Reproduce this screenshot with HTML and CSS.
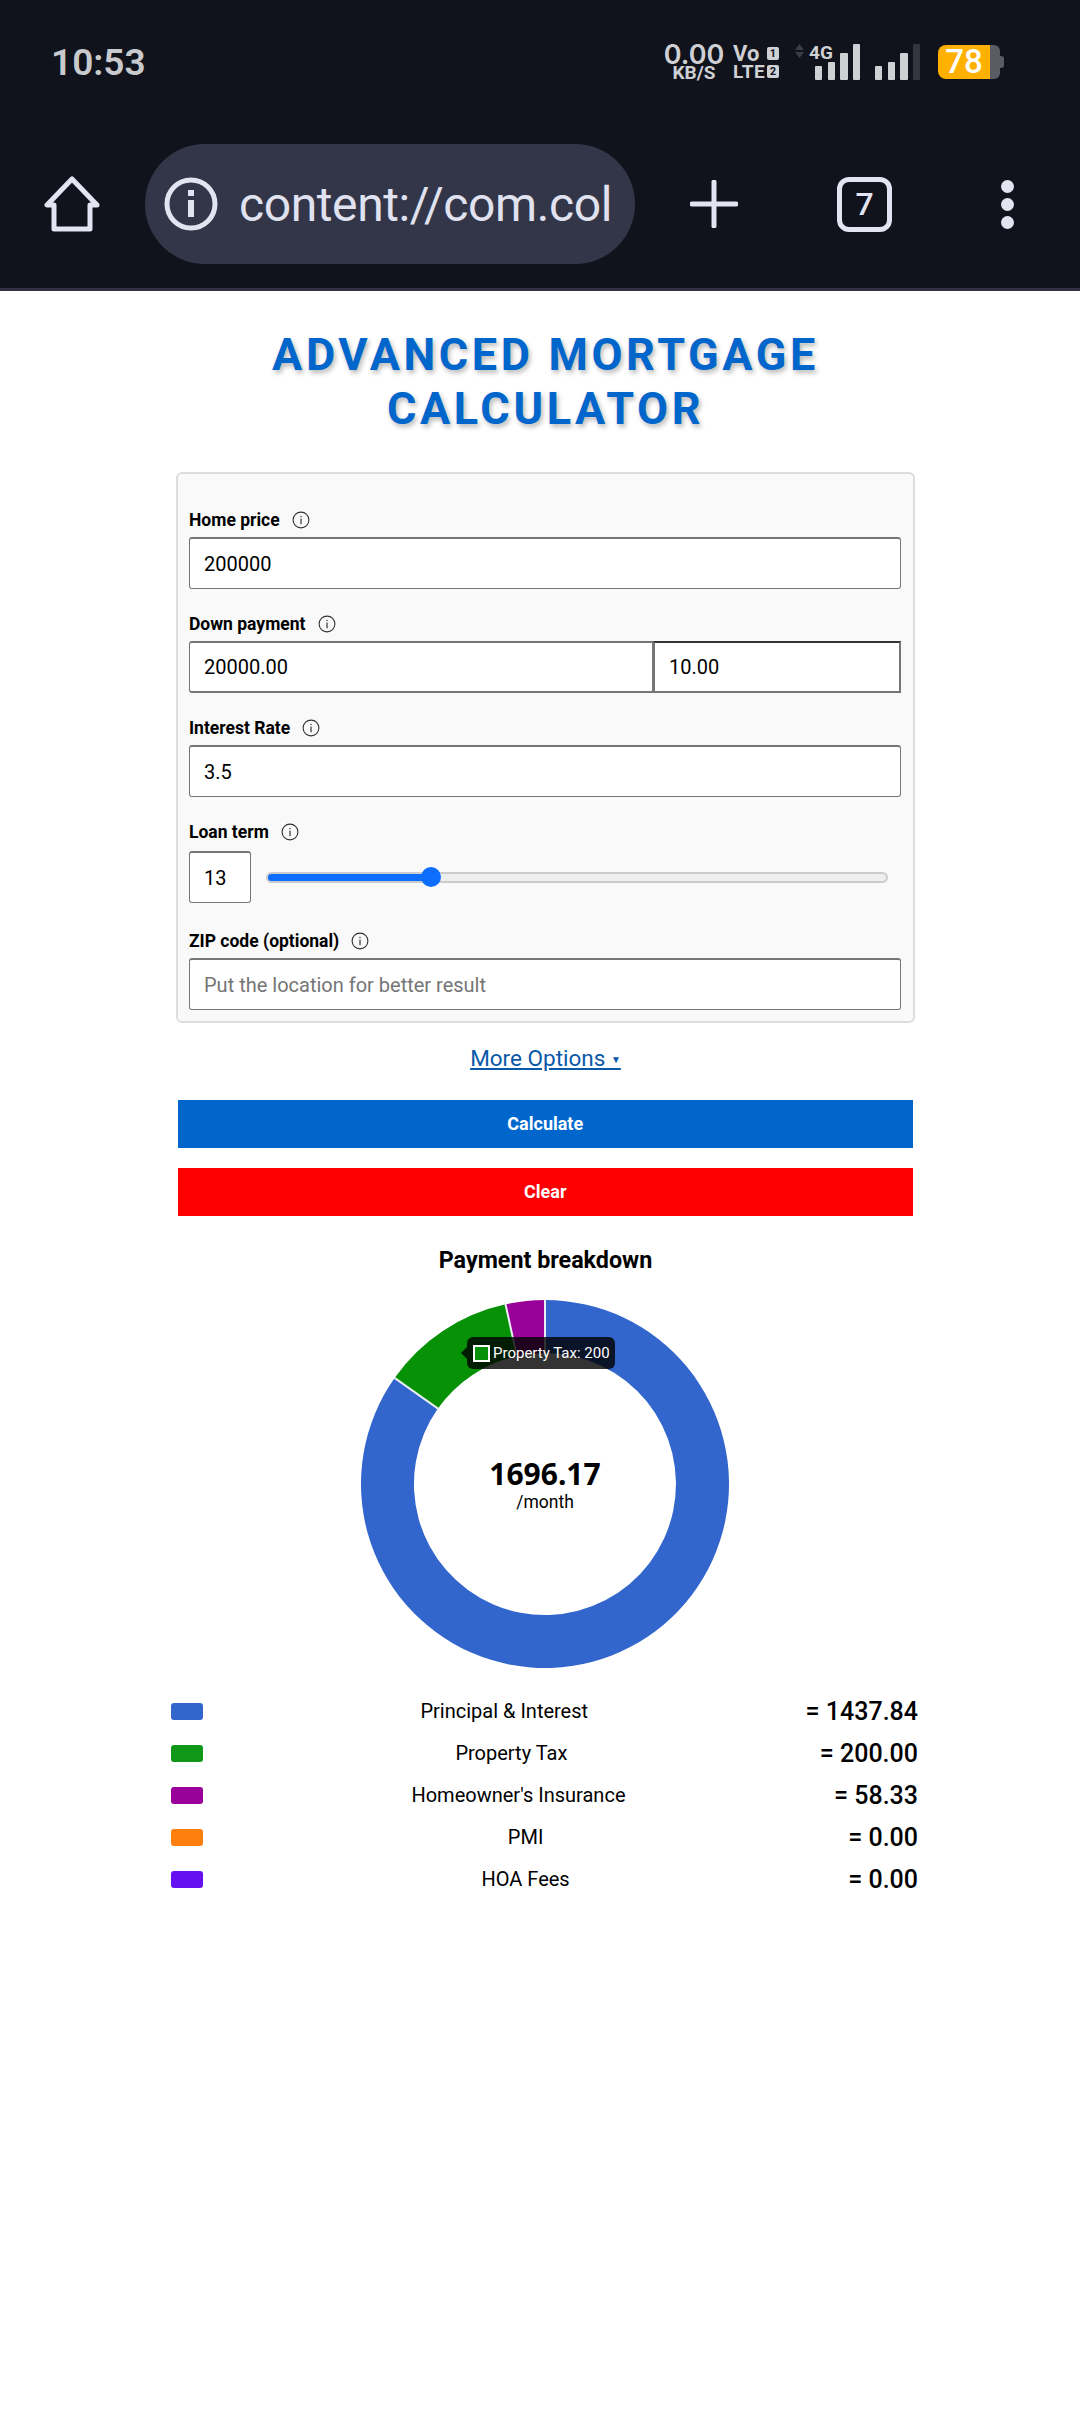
FILE: index.html
```html
<!DOCTYPE html>
<html lang="en">
<head>
    <meta charset="UTF-8">
    <meta name="viewport" content="width=device-width, initial-scale=1.0">
    <title>Advanced Mortgage Calculator</title>
    <link rel="stylesheet" href="styles.css">
</head>
<body>
    <svg class="defs" width="0" height="0">
        <symbol id="info" viewBox="0 0 18 18">
            <circle cx="9" cy="9" r="7.9" fill="none" stroke="#333" stroke-width="1.1"/>
            <rect x="8.4" y="7.6" width="1.2" height="5.6" fill="#333"/>
            <rect x="8.4" y="4.9" width="1.2" height="1.3" fill="#333"/>
        </symbol>
    </svg>

    <!-- Phone status bar + browser toolbar -->
    <header class="browser-bar">
        <div class="status-bar">
            <span class="clock">10:53</span>
            <div class="status-icons">
                <div class="net-speed">
                    <span class="speed-value">0.00</span>
                    <span class="speed-unit">KB/S</span>
                </div>
                <div class="volte">
                    <div class="volte-row"><span class="vo">Vo</span><span class="sim">1</span></div>
                    <div class="volte-row"><span class="lte">LTE</span><span class="sim">2</span></div>
                </div>
                <svg class="signal" width="126" height="36" viewBox="0 0 126 36">
                    <path d="M4.500 0 L9 6 H0 Z M0 8 H9 L4.500 14 Z" fill="#3a3d47"/>
                    <text x="14" y="15" class="signal-text">4G</text>
                    <rect x="20" y="22" width="7" height="14" rx="1" fill="#cfd0d3"/>
                    <rect x="33" y="18" width="7" height="18" rx="1" fill="#cfd0d3"/>
                    <rect x="45" y="9" width="8" height="27" rx="1" fill="#cfd0d3"/>
                    <rect x="58" y="0" width="7" height="36" rx="1" fill="#cfd0d3"/>
                    <rect x="80" y="22" width="7" height="14" rx="1" fill="#cfd0d3"/>
                    <rect x="93" y="18" width="7" height="18" rx="1" fill="#cfd0d3"/>
                    <rect x="105" y="9" width="8" height="27" rx="1" fill="#cfd0d3"/>
                    <rect x="118" y="0" width="7" height="36" rx="1" fill="#33363f"/>
                </svg>
                <div class="battery">
                    <span class="battery-level">78</span>
                    <span class="battery-rest"></span>
                </div>
            </div>
        </div>
        <div class="toolbar">
            <svg class="home-icon" width="56" height="56" viewBox="0 0 56 56">
                <path d="M28 3 L3 29 H10 V53 H46 V29 H53 Z" fill="none" stroke="#e2e4f2" stroke-width="5" stroke-linejoin="round"/>
            </svg>
            <div class="url-pill">
                <svg width="54" height="54" viewBox="0 0 54 54">
                    <circle cx="27" cy="27" r="24" fill="none" stroke="#e2e4f2" stroke-width="5"/>
                    <rect x="24" y="23" width="6" height="17" fill="#e2e4f2"/>
                    <rect x="24" y="13" width="6" height="6" fill="#e2e4f2"/>
                </svg>
                <span class="url-text">content://com.col</span>
            </div>
            <svg class="plus-icon" width="48" height="48" viewBox="0 0 48 48">
                <path d="M24 2 V46 M2 24 H46" stroke="#e2e4f2" stroke-width="5" stroke-linecap="round"/>
            </svg>
            <div class="tab-count">7</div>
            <div class="menu-dots"><span></span><span></span><span></span></div>
        </div>
    </header>

    <main class="calculator">
        <h1>ADVANCED MORTGAGE<br>CALCULATOR</h1>

        <form class="loan-form">
            <div class="form-group">
                <label>Home price <svg class="info"><use href="#info"/></svg></label>
                <input type="text" value="200000">
            </div>
            <div class="form-group">
                <label>Down payment <svg class="info"><use href="#info"/></svg></label>
                <div class="down-payment">
                    <input type="text" class="down-amount" value="20000.00">
                    <input type="text" class="down-percent" value="10.00">
                </div>
            </div>
            <div class="form-group">
                <label>Interest Rate <svg class="info"><use href="#info"/></svg></label>
                <input type="text" value="3.5">
            </div>
            <div class="form-group term-group">
                <label>Loan term <svg class="info"><use href="#info"/></svg></label>
                <div class="term-row">
                    <input type="text" class="term-value" value="13">
                    <input type="range" class="term-slider" min="1" max="48" value="13">
                </div>
            </div>
            <div class="form-group">
                <label>ZIP code (optional) <svg class="info"><use href="#info"/></svg></label>
                <input type="text" placeholder="Put the location for better result">
            </div>
        </form>

        <a href="#" class="more-options">More Options <small>▼</small></a>

        <button type="button" class="btn btn-calculate">Calculate</button>
        <button type="button" class="btn btn-clear">Clear</button>

        <h2>Payment breakdown</h2>

        <div class="chart">
            <svg width="380" height="380" viewBox="0 0 380 380">
                <path d="M190 6 A184 184 0 1 1 39.600 84 L82.900 114.500 A131 131 0 1 0 190 59 Z" fill="#3366cc"/>
                <path d="M39.600 84 A184 184 0 0 1 150.550 10.300 L161.900 62.100 A131 131 0 0 0 82.900 114.500 Z" fill="#069106"/>
                <path d="M150.550 10.300 A184 184 0 0 1 190 6 L190 59 A131 131 0 0 0 161.900 62.100 Z" fill="#990099"/>
                <!-- slice separators -->
                <path d="M190 5 V60 M38.800 83.400 L83.700 115.100 M150.300 9.300 L162.100 63.100" stroke="#e8eef2" stroke-width="2"/>
            </svg>
            <div class="chart-center">
                <strong>1696.17</strong>
                <span>/month</span>
            </div>
            <div class="chart-tooltip">
                <span class="tooltip-box"></span>
                <span>Property Tax: 200</span>
            </div>
        </div>

        <ul class="legend">
            <li><span class="swatch swatch-blue"></span><span class="legend-name">Principal &amp; Interest</span><span class="legend-value">= 1437.84</span></li>
            <li><span class="swatch swatch-green"></span><span class="legend-name">Property Tax</span><span class="legend-value">= 200.00</span></li>
            <li><span class="swatch swatch-purple"></span><span class="legend-name">Homeowner's Insurance</span><span class="legend-value">= 58.33</span></li>
            <li><span class="swatch swatch-orange"></span><span class="legend-name">PMI</span><span class="legend-value">= 0.00</span></li>
            <li><span class="swatch swatch-violet"></span><span class="legend-name">HOA Fees</span><span class="legend-value">= 0.00</span></li>
        </ul>
    </main>
</body>
</html>
```

FILE: styles.css
```css
* {
    box-sizing: border-box;
}

body {
    margin: 0;
    font-family: Roboto, sans-serif;
    background: #fff;
    color: #000;
}

.defs {
    position: absolute;
}

/* Browser chrome */
.browser-bar {
    height: 291px;
    padding-top: 44px;
    background: #10131c;
    border-bottom: 3px solid #30333f;
}

.status-bar {
    display: flex;
    align-items: center;
    height: 36px;
    padding: 0 76px 0 51px;
}

.clock {
    font-size: 37px;
    font-weight: 600;
    color: #c9cacd;
}

.status-icons {
    display: flex;
    align-items: center;
    margin-left: auto;
    color: #cfd0d3;
}

.net-speed {
    display: flex;
    flex-direction: column;
    align-items: center;
    width: 60px;
    font-weight: 700;
}

.speed-value {
    font-family: Inter, sans-serif;
    font-size: 27px;
    font-weight: 600;
    line-height: 21px;
}

.speed-unit {
    font-size: 19px;
    line-height: 15px;
}

.volte {
    width: 46px;
    margin-left: 9px;
    font-size: 19px;
    font-weight: 700;
    line-height: 15px;
}

.volte-row {
    display: flex;
    justify-content: space-between;
    align-items: center;
    height: 18px;
}

.vo {
    font-size: 22px;
}

.lte {
    letter-spacing: 0.5px;
}

.sim {
    width: 12px;
    height: 13px;
    background: #cfd0d3;
    color: #10131c;
    font-size: 11px;
    font-weight: 700;
    line-height: 13px;
    text-align: center;
    border-radius: 2px;
}

.signal {
    margin-left: 16px;
    overflow: visible;
}

.signal-text {
    font-size: 19px;
    font-weight: 700;
    fill: #cfd0d3;
}

.battery {
    display: flex;
    position: relative;
    height: 34px;
    margin-left: 17px;
}

.battery-level {
    width: 52px;
    background: #ffb000;
    color: #fff;
    border-radius: 8px 0 0 8px;
    font-size: 33px;
    font-weight: 500;
    line-height: 34px;
    text-align: center;
}

.battery-rest {
    width: 10px;
    background: #5a5c64;
    border-radius: 0 6px 6px 0;
}

.battery::after {
    content: "";
    width: 4px;
    height: 12px;
    margin-top: 11px;
    background: #5a5c64;
    border-radius: 0 3px 3px 0;
}

.toolbar {
    display: flex;
    align-items: center;
    height: 120px;
    margin-top: 64px;
    padding-left: 44px;
}

.url-pill {
    display: flex;
    align-items: center;
    gap: 21px;
    width: 490px;
    height: 120px;
    margin-left: 45px;
    padding-left: 19px;
    background: #323648;
    border-radius: 60px;
}

.url-text {
    font-size: 48px;
    letter-spacing: -0.4px;
    color: #e0e2f0;
    white-space: nowrap;
}

.plus-icon {
    margin-left: 55px;
}

.tab-count {
    width: 55px;
    height: 55px;
    margin-left: 99px;
    border: 5px solid #e2e4f2;
    border-radius: 12px;
    color: #e2e4f2;
    font-size: 32px;
    font-weight: 500;
    line-height: 45px;
    text-align: center;
}

.menu-dots {
    display: flex;
    flex-direction: column;
    gap: 5px;
    margin-left: 109px;
}

.menu-dots span {
    width: 13px;
    height: 13px;
    background: #e2e4f2;
    border-radius: 50%;
}

/* Calculator */
.calculator {
    width: 739px;
    margin-left: 176px;
}

h1 {
    margin: 0;
    padding-top: 37px;
    font-size: 45px;
    font-weight: 700;
    line-height: 54px;
    letter-spacing: 3.6px;
    color: #0066cc;
    text-align: center;
    text-shadow: 2px 3px 5px rgba(0, 0, 0, 0.28);
}

.loan-form {
    height: 551px;
    margin-top: 36px;
    padding: 36px 12px 0 11px;
    background: #f9f9f9;
    border: 2px solid #ddd;
    border-radius: 6px;
}

.form-group {
    margin-bottom: 25px;
}

.form-group label {
    display: flex;
    align-items: center;
    gap: 5px;
    height: 20px;
    margin-bottom: 7px;
    font-size: 17.5px;
    font-weight: 700;
}

.info {
    width: 18px;
    height: 18px;
    margin-left: 7px;
}

.form-group input[type="text"] {
    display: block;
    width: 100%;
    height: 52px;
    padding: 0 14px;
    background: #fff;
    border: 1px solid #767676;
    border-top-width: 2px;
    border-radius: 3px;
    font-family: Roboto, sans-serif;
    font-size: 20px;
    color: #000;
}

.form-group input::placeholder {
    color: #757575;
}

.down-payment {
    display: flex;
}

.form-group input[type="text"].down-amount {
    flex: 1;
    width: auto;
    min-width: 0;
    border-width: 2px 1px 2px 1px;
    border-radius: 3px 0 0 3px;
}

.form-group input[type="text"].down-percent {
    flex: none;
    width: 248px;
    border: 2px solid #767676;
    border-top-color: #333;
    border-radius: 0;
}

.term-group {
    margin-bottom: 28px;
}

.term-row {
    display: flex;
    align-items: center;
    margin-top: 9px;
}

.form-group input[type="text"].term-value {
    flex: none;
    width: 62px;
}

.term-slider {
    -webkit-appearance: none;
    appearance: none;
    flex: none;
    width: 622px;
    height: 11px;
    margin: 0 0 0 15px;
    background: linear-gradient(to right, #0d6efd 26.3%, transparent 26.3%) border-box, #eee;
    border: 2px solid #ccc;
    border-radius: 6px;
}

.term-slider::-webkit-slider-thumb {
    -webkit-appearance: none;
    width: 20px;
    height: 20px;
    background: #0d6efd;
    border: none;
    border-radius: 50%;
}

.more-options {
    display: block;
    width: fit-content;
    margin: 20px auto 0 auto;
    font-size: 22.5px;
    line-height: 30px;
    color: #0a58a8;
}

.more-options small {
    font-size: 10px;
    line-height: 0;
    vertical-align: 3px;
}

.btn {
    display: block;
    width: 735.5px;
    height: 48px;
    margin: 0 0 0 1.5px;
    border: none;
    color: #fff;
    font-family: Roboto, sans-serif;
    font-size: 18px;
    font-weight: 700;
}

.btn-calculate {
    margin-top: 27px;
    padding-bottom: 3px;
    background: #0066cc;
}

.btn-clear {
    margin-top: 20px;
    padding-bottom: 3px;
    background: #ff0000;
}

h2 {
    margin: 30px 0 0 0;
    font-size: 23.3px;
    font-weight: 700;
    line-height: 28px;
    text-align: center;
}

.chart {
    position: relative;
    width: 380px;
    height: 380px;
    margin: 20px 0 0 179px;
}

.chart svg {
    display: block;
}

.chart-center {
    position: absolute;
    top: 163px;
    left: 0;
    width: 100%;
    display: flex;
    flex-direction: column;
    align-items: center;
}

.chart-center strong {
    font-family: "Noto Sans", sans-serif;
    font-size: 30px;
    line-height: 34px;
}

.chart-center span {
    font-size: 17.5px;
    line-height: 22px;
}

.chart-tooltip {
    position: absolute;
    top: 43px;
    left: 112px;
    display: flex;
    align-items: center;
    gap: 3px;
    width: 148px;
    height: 32px;
    padding-left: 6px;
    background: rgba(0, 0, 0, 0.8);
    border-radius: 6px;
    color: #fff;
    font-size: 15px;
    white-space: nowrap;
}

.chart-tooltip::before {
    content: "";
    position: absolute;
    left: -6px;
    top: 10px;
    border-style: solid;
    border-width: 6px 6px 6px 0;
    border-color: transparent rgba(0, 0, 0, 0.8) transparent transparent;
}

.tooltip-box {
    width: 17px;
    height: 17px;
    background: #069106;
    border: 2px solid #fff;
}

.legend {
    width: 747px;
    margin: 16px 0 0 -5px;
    padding: 0;
    list-style: none;
}

.legend li {
    display: flex;
    align-items: center;
    height: 42px;
}

.swatch {
    width: 32px;
    height: 17px;
    border-radius: 3px;
}

.swatch-blue { background: #3366cc; }
.swatch-green { background: #109618; }
.swatch-purple { background: #990099; }
.swatch-orange { background: #ff7f0e; }
.swatch-violet { background: #6610f2; }

.legend-name {
    flex: 1;
    font-size: 20px;
    text-align: center;
}

.legend-value {
    font-size: 25px;
    font-weight: 500;
}
```
